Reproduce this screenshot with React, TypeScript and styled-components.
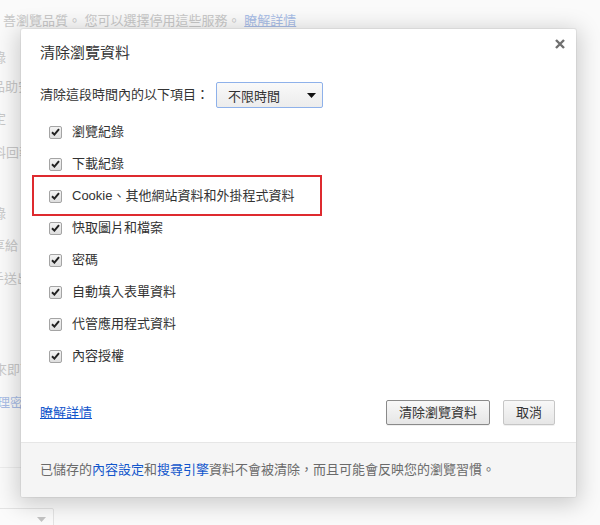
import React from "react";
import styled, { createGlobalStyle } from "styled-components";

const GlobalStyle = createGlobalStyle`
  html, body {
    margin: 0;
    padding: 0;
    background: #fafafa;
  }
  body {
    font-family: "Liberation Sans", "Noto Sans CJK TC", sans-serif;
    font-size: 13px;
    color: #333;
  }
`;

const Page = styled.div`
  position: relative;
  width: 600px;
  height: 525px;
  overflow: hidden;
  background: #fafafa;
`;

const BgColumn = styled.div`
  display: flex;
  flex-direction: column;
  color: #c8c8c8;
  white-space: nowrap;
`;

const BgTopLine = styled.div`
  height: 18px;
  line-height: 18px;
  margin-top: 12px;
  margin-left: 3px;
`;

const BgLink = styled.span<{ $faded?: boolean }>`
  color: #a9bde6;
  text-decoration: ${(p) => (p.$faded ? "none" : "underline")};
`;

const BgLine = styled.div<{ $gap: number; $shift: number }>`
  height: 18px;
  line-height: 18px;
  margin-top: ${(p) => p.$gap}px;
  margin-left: ${(p) => p.$shift}px;
`;

const BgRule = styled.div<{ $gap: number }>`
  height: 1px;
  width: 40px;
  background: #ececec;
  margin-top: ${(p) => p.$gap}px;
`;

const BgSelect = styled.div<{ $gap: number }>`
  display: flex;
  justify-content: flex-end;
  align-items: center;
  width: 56px;
  height: 22px;
  margin-top: ${(p) => p.$gap}px;
  margin-left: -2px;
  padding-right: 7px;
  box-sizing: border-box;
  border: 1px solid #e4e4e4;
  border-radius: 2px;
  background: #fbfbfb;
`;

const Dialog = styled.div`
  position: absolute;
  left: 21px;
  top: 29px;
  width: 555px;
  height: 468px;
  box-sizing: border-box;
  background: #fff;
  border-radius: 2px;
  box-shadow: 0 4px 22px 4px rgba(0, 0, 0, 0.18), 0 0 0 1px rgba(0, 0, 0, 0.05);
  display: flex;
  flex-direction: column;
  overflow: hidden;
`;

const Body = styled.div`
  flex: 1;
  display: flex;
  flex-direction: column;
  padding: 10px 21px 17px 19px;
`;

const Header = styled.div`
  display: flex;
  justify-content: space-between;
  align-items: flex-start;
  margin-right: -10px;
`;

const Title = styled.div`
  font-size: 15px;
  line-height: 20px;
  color: #333;
  margin-top: 4px;
`;

const CloseButton = styled.div`
  width: 10px;
  height: 10px;
  display: flex;
  color: #777;
`;

const RangeRow = styled.div`
  display: flex;
  align-items: center;
  height: 26px;
  margin-top: 19px;
`;

const RangeLabel = styled.span`
  line-height: 18px;
  color: #333;
  margin-right: 7px;
`;

const Select = styled.div`
  display: flex;
  align-items: center;
  justify-content: space-between;
  box-sizing: border-box;
  width: 107px;
  height: 26px;
  padding: 0 6px 0 11px;
  border: 1px solid #8eb1ea;
  border-radius: 2px;
  background: linear-gradient(#f9f9f9, #ececec);
  color: #333;
`;

const List = styled.div`
  display: flex;
  flex-direction: column;
  margin-top: 8px;
  padding-left: 9px;
`;

const Row = styled.div`
  position: relative;
  display: flex;
  align-items: center;
  gap: 10px;
  height: 32px;
`;

const Highlight = styled.div`
  position: absolute;
  left: -17px;
  top: -5px;
  bottom: -4px;
  width: 290px;
  box-sizing: border-box;
  border: 2px solid #de2a2f;
  pointer-events: none;
`;

const Box = styled.span`
  display: flex;
  align-items: center;
  justify-content: center;
  width: 13px;
  height: 13px;
  box-sizing: border-box;
  border: 1px solid #a4a4a4;
  border-radius: 2px;
  background: linear-gradient(#f3f3f3, #dedede);
`;

const Label = styled.span`
  line-height: 18px;
  color: #333;
`;

const Actions = styled.div`
  display: flex;
  align-items: center;
  justify-content: space-between;
  margin-top: auto;
  height: 25px;
`;

const Link = styled.a`
  color: #1155cc;
  text-decoration: underline;
  line-height: 18px;
  cursor: pointer;
`;

const Buttons = styled.div`
  display: flex;
  gap: 13px;
`;

const Button = styled.button<{ $primary?: boolean }>`
  height: 25px;
  box-sizing: border-box;
  padding: 0 12px;
  font: inherit;
  font-size: 13px;
  color: #333;
  border: 1px solid ${(p) => (p.$primary ? "#8a8a8a" : "#c6c6c6")};
  border-radius: 2px;
  background: linear-gradient(#f8f8f8, #e6e6e6);
  box-shadow: 0 1px 0 rgba(0, 0, 0, 0.06);
  line-height: 23px;
`;

const Footer = styled.div`
  display: flex;
  align-items: center;
  height: 55px;
  box-sizing: border-box;
  padding: 0 19px;
  border-top: 1px solid #e6e6e6;
  background: #f5f5f5;
  color: #6a6a6a;
  line-height: 18px;
`;

const FooterLink = styled.a`
  color: #1155cc;
  text-decoration: none;
`;

const Check = () => (
  <svg width="9" height="8" viewBox="0 0 9 8">
    <path d="M1 4.3 L3.4 6.6 L8 1.2" fill="none" stroke="#222" strokeWidth="2" />
  </svg>
);

const items = [
  "瀏覽紀錄",
  "下載紀錄",
  "Cookie、其他網站資料和外掛程式資料",
  "快取圖片和檔案",
  "密碼",
  "自動填入表單資料",
  "代管應用程式資料",
  "內容授權",
];

const bgLines: { text: string; gap: number; shift: number; link?: boolean }[] = [
  { text: "錄", gap: 19, shift: -7 },
  { text: "品助安", gap: 11, shift: -8 },
  { text: "定", gap: 14, shift: -7 },
  { text: "料回報", gap: 16, shift: -7 },
  { text: "錄", gap: 43, shift: -7 },
  { text: "享給", gap: 14, shift: -8 },
  { text: "手送出", gap: 15, shift: -9 },
  { text: "來即可", gap: 73, shift: -6 },
  { text: "理密", gap: 15, shift: -3, link: true },
];

export default function App() {
  return (
    <Page>
      <GlobalStyle />
      <BgColumn>
        <BgTopLine>
          善瀏覽品質。 您可以選擇停用這些服務。 <BgLink>瞭解詳情</BgLink>
        </BgTopLine>
        {bgLines.map((l, i) => (
          <BgLine key={i} $gap={l.gap} $shift={l.shift}>
            {l.link ? <BgLink $faded>{l.text}</BgLink> : l.text}
          </BgLine>
        ))}
        <BgRule $gap={55} />
        <BgSelect $gap={40}>
          <svg width="9" height="5" viewBox="0 0 9 5">
            <path d="M0 0 H9 L4.5 5 Z" fill="#c4c4c4" />
          </svg>
        </BgSelect>
      </BgColumn>

      <Dialog>
        <Body>
          <Header>
            <Title>清除瀏覽資料</Title>
            <CloseButton>
              <svg width="10" height="10" viewBox="0 0 10 10">
                <path d="M1 1 L9 9 M9 1 L1 9" stroke="#6f6f6f" strokeWidth="2.4" />
              </svg>
            </CloseButton>
          </Header>
          <RangeRow>
            <RangeLabel>清除這段時間內的以下項目：</RangeLabel>
            <Select>
              <span>不限時間</span>
              <svg width="9" height="5" viewBox="0 0 9 5">
                <path d="M0 0 H9 L4.5 5 Z" fill="#111" />
              </svg>
            </Select>
          </RangeRow>
          <List>
            {items.map((t, i) => (
              <Row key={t}>
                {i === 2 && <Highlight />}
                <Box>
                  <Check />
                </Box>
                <Label>{t}</Label>
              </Row>
            ))}
          </List>
          <Actions>
            <Link>瞭解詳情</Link>
            <Buttons>
              <Button $primary>清除瀏覽資料</Button>
              <Button>取消</Button>
            </Buttons>
          </Actions>
        </Body>
        <Footer>
          <span>
            已儲存的<FooterLink>內容設定</FooterLink>和<FooterLink>搜尋引擎</FooterLink>
            資料不會被清除，而且可能會反映您的瀏覽習慣。
          </span>
        </Footer>
      </Dialog>
    </Page>
  );
}
